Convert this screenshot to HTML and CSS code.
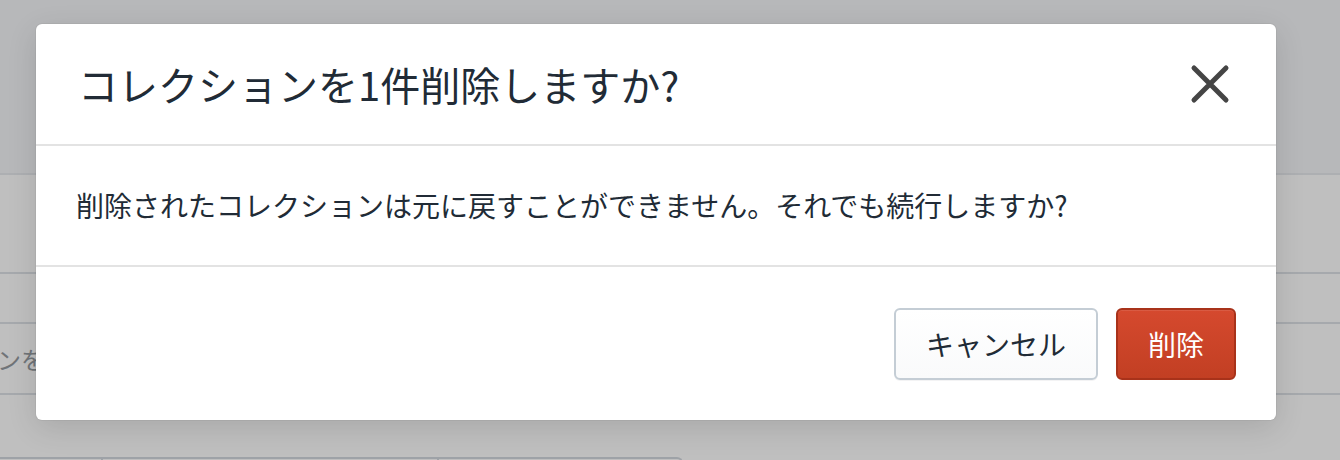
FILE: index.html
```html
<!DOCTYPE html>
<html lang="ja">
<head>
<meta charset="utf-8">
<link rel="stylesheet" href="styles.css">
</head>
<body>
<div class="page">
  <div class="topbar"></div>
  <div class="row row-a"></div>
  <div class="row row-b"></div>
  <div class="row row-c"><span class="ghost-text">ンを</span></div>
  <div class="row row-d"></div>
  <div class="table-head">
    <div class="cell c1"></div>
    <div class="cell c2"></div>
    <div class="cell c3"></div>
  </div>
</div>

<div class="modal" role="dialog">
  <div class="modal-header">
    <h2 class="modal-title">コレクションを1件削除しますか?</h2>
    <button class="close-btn" aria-label="閉じる">
      <svg width="40" height="40" viewBox="0 0 40 40">
        <path d="M4 4 L36 36 M36 4 L4 36" stroke="#454545" stroke-width="5" stroke-linecap="round" fill="none"/>
      </svg>
    </button>
  </div>
  <div class="modal-body">
    <p>削除されたコレクションは元に戻すことができません。それでも続行しますか?</p>
  </div>
  <div class="modal-footer">
    <button class="btn btn-cancel">キャンセル</button>
    <button class="btn btn-danger">削除</button>
  </div>
</div>
</body>
</html>
```

FILE: styles.css
```css
* { box-sizing: border-box; }
html, body { margin: 0; padding: 0; }
body {
  width: 1340px;
  height: 460px;
  overflow: hidden;
  background: #bfbfbf;
  font-family: "Noto Sans CJK JP", "Noto Sans", sans-serif;
  color: #212b36;
  position: relative;
}
.page { display: flex; flex-direction: column; }
.topbar {
  height: 175px;
  background: #b7b8ba;
  border-bottom: 2px solid #adafb2;
}
.row { border-bottom: 2px solid #a6a9ad; }
.row-a { height: 99px; }
.row-b { height: 50px; }
.row-c {
  height: 71px;
  display: flex;
  align-items: center;
  overflow: hidden;
}
.ghost-text {
  margin-left: -3px;
  font-size: 24px;
  color: #707478;
  white-space: nowrap;
}
.row-d { height: 62px; border-bottom: none; }
.table-head {
  display: flex;
  height: 20px;
  width: 683px;
  border-top: 2px solid #9ea2a7;
  border-right: 2px solid #9ea2a7;
  border-top-right-radius: 6px;
}
.cell { height: 100%; border-right: 2px solid #9ea2a7; }
.c1 { width: 103px; }
.c2 { width: 336px; }
.c3 { flex: 1; border-right: none; }

.modal {
  position: absolute;
  left: 36px;
  top: 24px;
  width: 1240px;
  height: 396px;
  background: #ffffff;
  border-radius: 6px;
  box-shadow: 0 0 0 1px rgba(0,0,0,0.04), 0 8px 30px rgba(0,0,0,0.12);
  display: flex;
  flex-direction: column;
}
.modal-header {
  height: 122px;
  border-bottom: 2px solid #e3e3e3;
  display: flex;
  align-items: center;
  justify-content: space-between;
  padding: 0 42px 0 42px;
}
.modal-title {
  margin: 0;
  font-size: 40px;
  font-weight: 400;
  line-height: 1.2;
  color: #212b36;
}
.close-btn {
  background: none;
  border: none;
  padding: 0;
  width: 40px;
  height: 40px;
  margin-right: 4px;
  display: flex;
  align-items: center;
  justify-content: center;
  cursor: pointer;
}
.modal-body {
  height: 121px;
  border-bottom: 2px solid #e3e3e3;
  display: flex;
  align-items: center;
  padding: 0 40px;
}
.modal-body p {
  margin: 0;
  font-size: 28px;
  line-height: 1.4;
  color: #212b36;
}
.modal-footer {
  flex: 1;
  display: flex;
  justify-content: flex-end;
  align-items: center;
  gap: 18px;
  padding: 0 40px;
}
.btn {
  height: 72px;
  border-radius: 6px;
  font-family: inherit;
  font-size: 28px;
  padding: 0;
  cursor: pointer;
}
.btn-cancel {
  width: 204px;
  background: linear-gradient(#ffffff, #f9fafb);
  border: 2px solid #c4cdd5;
  color: #212b36;
  box-shadow: 0 1px 0 rgba(22,29,37,0.05);
}
.btn-danger {
  width: 120px;
  background: linear-gradient(#d5492e, #c23f23);
  border: 2px solid #a8321a;
  color: #ffffff;
  box-shadow: inset 0 1px 0 rgba(255,255,255,0.1);
}
```
